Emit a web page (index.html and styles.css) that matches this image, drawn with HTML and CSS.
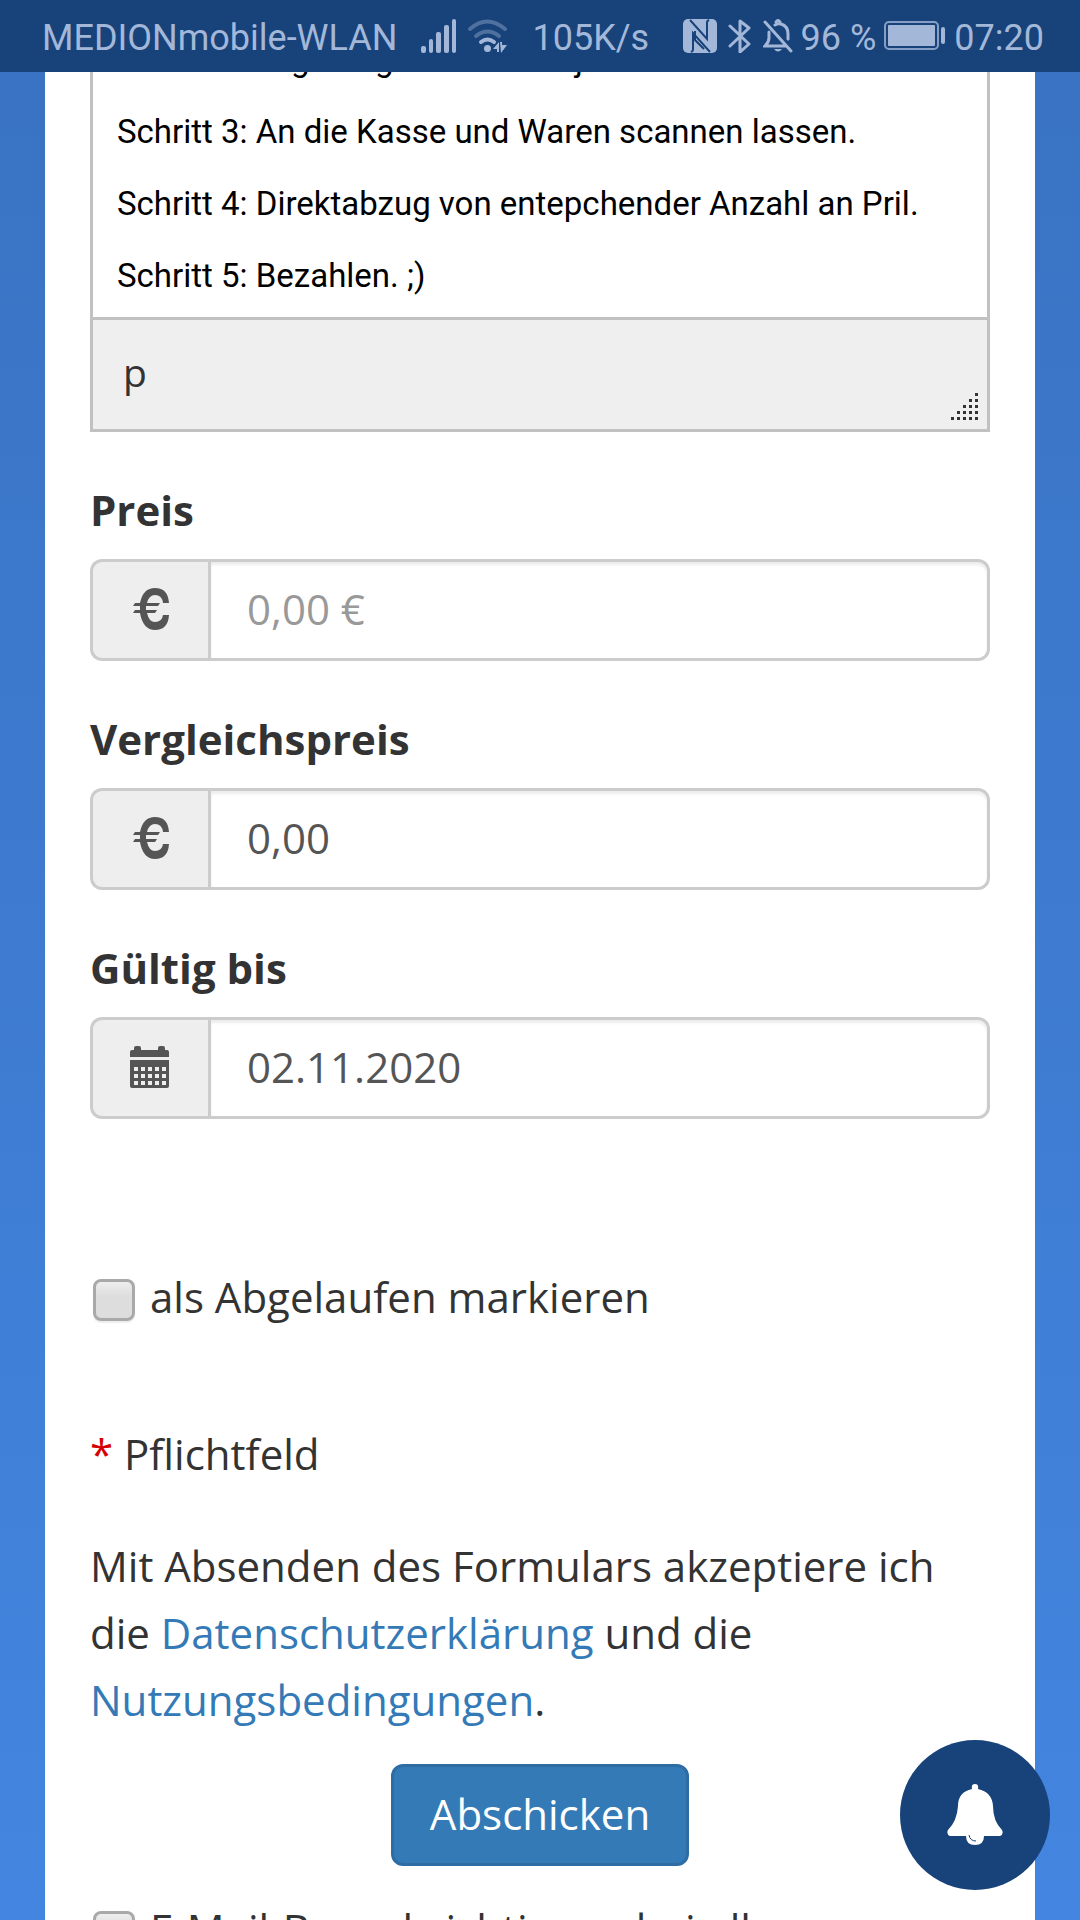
FILE: index.html
```html
<!DOCTYPE html>
<html lang="de">
<head>
  <meta charset="utf-8">
  <meta name="viewport" content="width=device-width, initial-scale=1">
  <title>Deal bearbeiten</title>
  <link rel="stylesheet" href="styles.css">
</head>
<body>
  <header class="status">
    <div class="status-group status-left">
      <span>MEDIONmobile-WLAN</span>
      <div class="status-icons">
        <svg width="36" height="34" viewBox="0 0 36 34" aria-hidden="true">
          <g fill="currentColor"><rect x="0" y="27" width="5" height="7" rx="2"/><rect x="8" y="20" width="4" height="14" rx="2"/><rect x="15" y="13" width="5" height="21" rx="2"/><rect x="23" y="6" width="5" height="28" rx="2"/><rect x="31" y="0" width="4" height="34" rx="2"/></g>
        </svg>
        <svg width="40" height="34" viewBox="0 0 40 34" fill="none" stroke="currentColor" stroke-width="4" stroke-linecap="round" aria-hidden="true">
          <g opacity=".4"><path d="M2 10Q19-5 37 10"/><path d="M8 17q11.500-9 23 0"/></g>
          <path d="M13 23q6.500-5 13 0"/>
          <circle cx="19.500" cy="29.500" r="3.500" fill="currentColor" stroke="none"/>
          <path d="M25 30l6-7v10h-2v-3zM32 23h2v3h5l-6 8z" fill="currentColor" stroke="none"/>
        </svg>
      </div>
      <span>105K/s</span>
    </div>
    <div class="status-group status-right">
      <div class="status-icons">
        <svg width="34" height="34" viewBox="0 0 34 34" aria-hidden="true">
          <rect width="34" height="34" rx="5" fill="currentColor"/>
          <path d="M7 1l17 19V3c0-1 2-2 2-2M27 33L10 14v17c0 1-2 2-2 2" fill="none" stroke="#18427a" stroke-width="2"/>
          <path d="M12 12v9l9 9" fill="none" stroke="#18427a" stroke-width="2"/>
        </svg>
        <svg width="24" height="34" viewBox="0 0 24 34" fill="none" stroke="currentColor" stroke-width="3" stroke-linejoin="round" stroke-linecap="round" aria-hidden="true">
          <path d="M2 7l19 18-9 8V2l9 7L2 27"/>
        </svg>
        <svg width="30" height="34" viewBox="0 0 30 34" fill="none" stroke="currentColor" stroke-width="3" stroke-linecap="round" aria-hidden="true">
          <path d="M2 3l26 29M12 6q3-2 6-1 7 2 7 10v5M6 13v6q0 4-4 8h20M13 3q2-3 4 0"/>
          <path d="M11 30h8q-4 5-8 0z" fill="currentColor" stroke="none"/>
        </svg>
      </div>
      <span>96 %</span>
      <svg width="62" height="30" viewBox="0 0 62 30" aria-hidden="true">
        <rect x="1" y="1" width="53" height="27" rx="4" fill="none" stroke="currentColor" stroke-width="2" opacity=".8"/>
        <rect x="4" y="4" width="47" height="21" rx="1" fill="currentColor"/>
        <rect x="57" y="6" width="4" height="17" rx="2" fill="currentColor"/>
      </svg>
      <span>07:20</span>
    </div>
  </header>

  <main class="page">
    <form class="sheet">
      <div class="editor">
        <div class="editor-body">
          <p>Schritt 2: Lege Angebot in dem je</p>
          <p>Schritt 3: An die Kasse und Waren scannen lassen.</p>
          <p>Schritt 4: Direktabzug von entepchender Anzahl an Pril.</p>
          <p>Schritt 5: Bezahlen. ;)</p>
        </div>
        <div class="editor-foot">
          <span class="path">p</span>
          <svg class="grip" width="27" height="27" viewBox="0 0 27 27" fill="currentColor" aria-hidden="true">
            <path d="M24 0h3v3h-3zM18 6h3v3h-3zM24 6h3v3h-3zM12 12h3v3h-3zM18 12h3v3h-3zM24 12h3v3h-3zM6 18h3v3H6zM12 18h3v3h-3zM18 18h3v3h-3zM24 18h3v3h-3zM0 24h3v3H0zM6 24h3v3H6zM12 24h3v3h-3zM18 24h3v3h-3zM24 24h3v3h-3z"/>
          </svg>
        </div>
      </div>

      <div class="field">
        <label for="preis">Preis</label>
        <div class="input-group">
          <span class="addon">
            <svg width="38" height="42" viewBox="0 0 38 42" aria-hidden="true"><path d="M37 15h-6q-1-8-8-8-6 0-8 8h13l-2 3H14v4h11l-2 3H15q2 9 8 9 7 0 8-7h6q-1 15-14 15Q11 42 8 25H1l2-3h5v-4H1l2-3h5Q11 0 23 0q13 0 14 15z" fill="currentColor"/></svg>
          </span>
          <input id="preis" type="text" placeholder="0,00 €">
        </div>
      </div>

      <div class="field">
        <label for="vergleich">Vergleichspreis</label>
        <div class="input-group">
          <span class="addon">
            <svg width="38" height="42" viewBox="0 0 38 42" aria-hidden="true"><path d="M37 15h-6q-1-8-8-8-6 0-8 8h13l-2 3H14v4h11l-2 3H15q2 9 8 9 7 0 8-7h6q-1 15-14 15Q11 42 8 25H1l2-3h5v-4H1l2-3h5Q11 0 23 0q13 0 14 15z" fill="currentColor"/></svg>
          </span>
          <input id="vergleich" type="text" value="0,00">
        </div>
      </div>

      <div class="field">
        <label for="gueltig">Gültig bis</label>
        <div class="input-group">
          <span class="addon">
            <svg width="42" height="42" viewBox="0 0 42 42" aria-hidden="true">
              <path d="M0 11V6q0-2 2-2h2V2q0-2 2-2h3q2 0 2 2v2h17V2q0-2 2-2h3q2 0 2 2v2h2q2 0 2 2v5z" fill="currentColor"/>
              <path fill-rule="evenodd" d="M0 14h39v26q0 2-2 2H2q-2 0-2-2zM4 21v4h4v-4zM11 21v4h4v-4zM18 21v4h4v-4zM25 21v4h4v-4zM32 21v4h4v-4zM4 28v4h4v-4zM11 28v4h4v-4zM18 28v4h4v-4zM25 28v4h4v-4zM32 28v4h4v-4zM4 35v4h4v-4zM11 35v4h4v-4zM18 35v4h4v-4zM25 35v4h4v-4zM32 35v4h4v-4z" fill="currentColor"/>
            </svg>
          </span>
          <input id="gueltig" type="text" value="02.11.2020">
        </div>
      </div>

      <label class="check expired"><input type="checkbox"><span>als Abgelaufen markieren</span></label>

      <p class="required"><span class="star">*</span> Pflichtfeld</p>

      <p class="terms">Mit Absenden des Formulars akzeptiere ich die <a href="#datenschutz">Datenschutzerklärung</a> und die <a href="#nutzung">Nutzungsbedingungen</a>.</p>

      <button class="submit" type="submit">Abschicken</button>

      <label class="check"><input type="checkbox"><span>E-Mail-Benachrichtigung bei allen</span></label>
    </form>
  </main>

  <button class="bell" type="button" aria-label="Benachrichtigungen">
    <svg width="56" height="62" viewBox="0 0 56 62" aria-hidden="true">
      <path d="M25 5q-1-5 3-5t3 5q14 3 15 17 0 15 9 24 2 4-2 6H37q0 9-9 9t-9-9H3q-4-2-2-6 9-9 10-24Q11 8 25 5z" fill="#fff"/>
      <path d="M22 51q1 6 7 6" fill="none" stroke="#18427a" stroke-width="1"/>
    </svg>
  </button>
</body>
</html>
```
FILE: styles.css
```css
* {
  box-sizing: border-box;
}

body {
  display: flex;
  flex-direction: column;
  height: 100vh;
  margin: 0;
  background: linear-gradient(#3972c2, #4385e0);
  color: #333;
  font-family: "Open Sans", "Noto Sans", sans-serif;
  font-size: 42px;
  line-height: 67px;
}

p {
  margin: 0;
}

/* Status bar */
.status {
  display: flex;
  flex: none;
  align-items: center;
  justify-content: space-between;
  height: 72px;
  padding: 0 36px 0 42px;
  background: #18427a;
  color: #a3b8d8;
  font-family: Roboto, sans-serif;
  font-size: 36px;
  line-height: 42px;
  white-space: nowrap;
}

.status span {
  padding-top: 3px;
}

.status-group,
.status-icons {
  display: flex;
  align-items: center;
}

.status-left {
  gap: 24px;
}

.status-right {
  gap: 8px;
}

.status-icons {
  gap: 11px;
}

/* Page */
.page {
  flex: 1;
  min-height: 0;
  padding: 0 45px;
  overflow-y: auto;
  scrollbar-width: none;
}

.sheet {
  display: flex;
  flex-direction: column;
  padding: 0 45px;
  background: #fff;
}

/* Editor */
.editor {
  border: 3px solid #c1c1c1;
  border-top: 0;
}

.editor-body {
  display: flex;
  flex-direction: column;
  justify-content: flex-end;
  gap: 33px;
  height: 245px;
  padding: 0 24px 22px;
  overflow: hidden;
  color: #000;
  font-family: Roboto, sans-serif;
  font-size: 33px;
  line-height: 39px;
}

.editor-foot {
  display: flex;
  align-items: center;
  justify-content: space-between;
  height: 112px;
  padding: 0 9px 0 30px;
  border-top: 3px solid #c1c1c1;
  background: #efefef;
}

.path {
  padding-bottom: 6px;
  font-size: 39px;
}

.grip {
  align-self: flex-end;
  margin-bottom: 9px;
}

/* Fields */
.field {
  display: flex;
  flex-direction: column;
  gap: 16px;
  margin-top: 44px;
}

.field label {
  font-weight: 700;
}

.input-group {
  display: flex;
  height: 102px;
}

.addon {
  display: flex;
  flex: none;
  align-items: center;
  justify-content: center;
  width: 118px;
  padding-bottom: 2px;
  border: 3px solid #ccc;
  border-right: 0;
  border-radius: 12px 0 0 12px;
  background: #eee;
  color: #555;
}

.input-group input {
  flex: 1;
  min-width: 0;
  padding: 0 36px 3px;
  border: 3px solid #ccc;
  border-radius: 0 12px 12px 0;
  background: #fff;
  box-shadow: inset 0 3px 3px rgba(0, 0, 0, 0.075);
  color: #555;
  font: inherit;
}

.input-group input::placeholder {
  color: #999;
  opacity: 1;
}

/* Check boxes */
.check {
  display: flex;
  align-items: center;
  gap: 15px;
  padding-left: 3px;
  white-space: nowrap;
}

.check input {
  flex: none;
  width: 42px;
  height: 42px;
  margin: 6px 0 0;
  appearance: none;
  border: 3px solid #a9a9a9;
  border-radius: 8px;
  background: linear-gradient(#eee, #ddd 40%, #ddd);
  box-shadow: 0 2px 1px #eee;
}

.expired {
  margin-top: 144px;
}

.required {
  margin: 90px 0 45px;
}

.star {
  color: #d60000;
}

.terms a {
  color: #337ab7;
  text-decoration: none;
}

.submit {
  align-self: center;
  height: 102px;
  margin: 31px 0 29px;
  padding: 0 36px 3px;
  border: 3px solid #2e6da4;
  border-radius: 12px;
  background: #337ab7;
  color: #fff;
  font: inherit;
}

/* Floating notification button */
.bell {
  position: fixed;
  right: 30px;
  bottom: 30px;
  display: flex;
  align-items: center;
  justify-content: center;
  width: 150px;
  height: 150px;
  padding: 0;
  border: 0;
  border-radius: 50%;
  background: #18427a;
}
```
